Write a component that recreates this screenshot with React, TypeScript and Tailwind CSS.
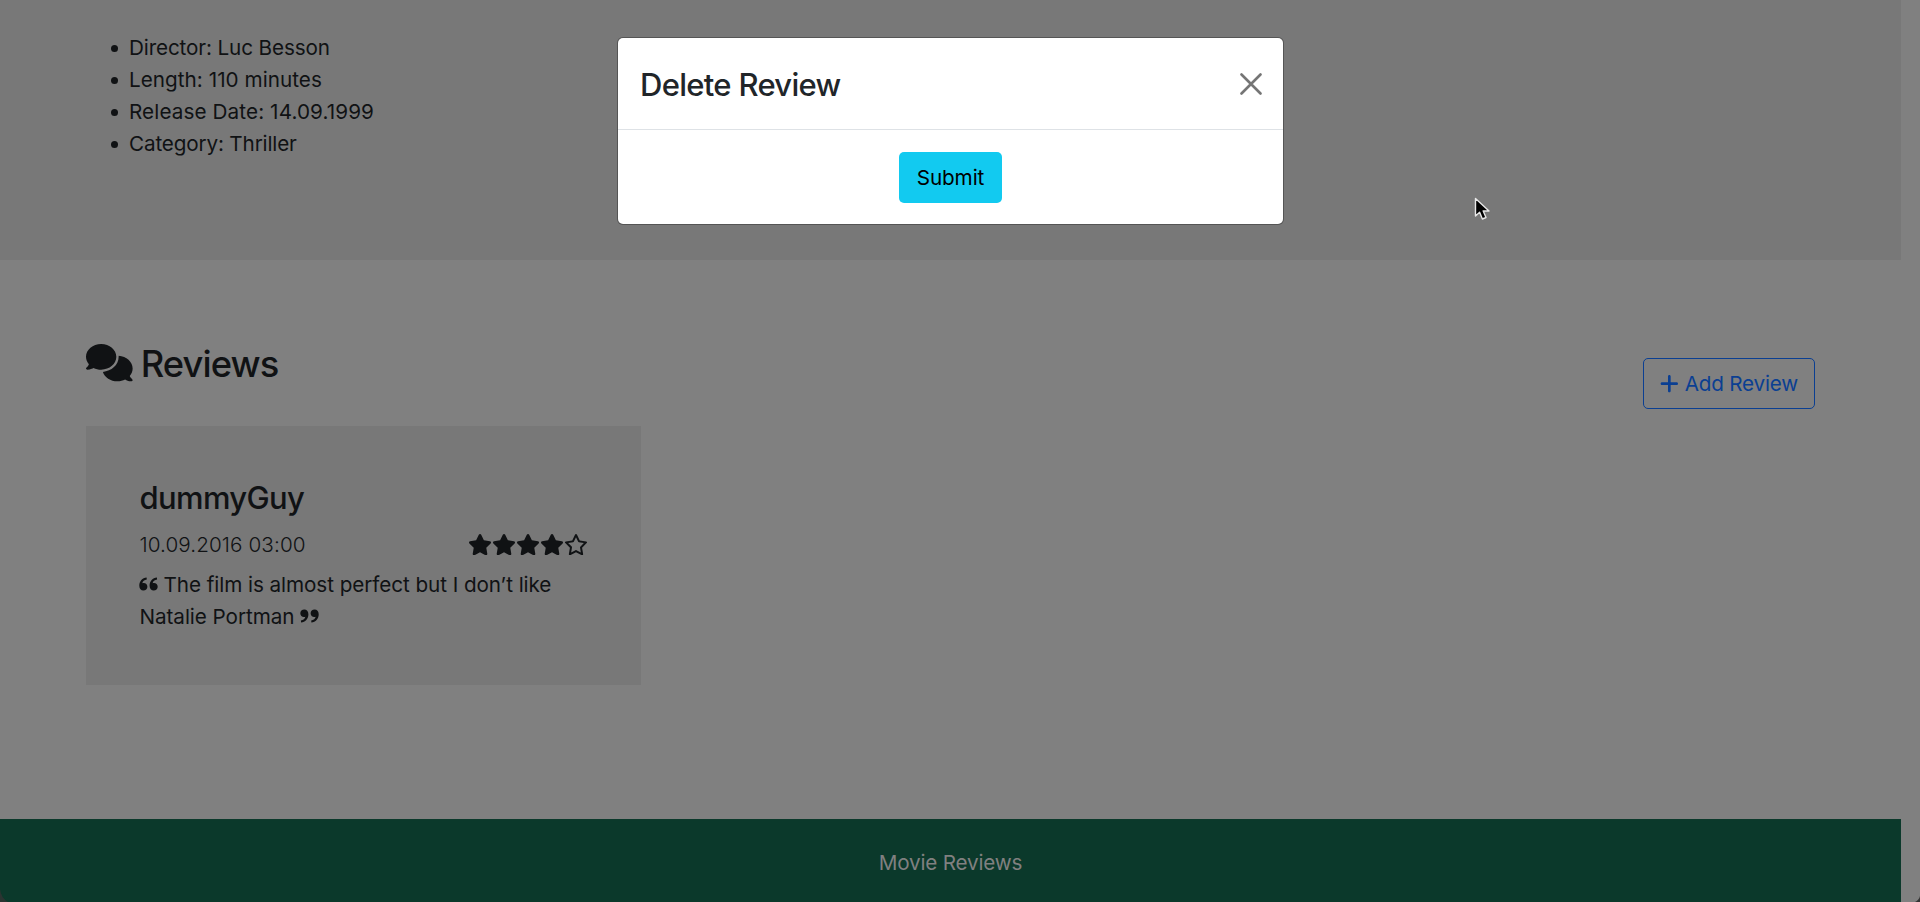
import { FaComments, FaPlus, FaRegStar, FaStar } from "react-icons/fa6";

const facts = [
  { text: "Director: Luc Besson", tracking: "tracking-[-0.13px]" },
  { text: "Length: 110 minutes", tracking: "tracking-[0.03px]" },
  { text: "Release Date: 14.09.1999", tracking: "tracking-[0.1px]" },
  { text: "Category: Thriller", tracking: "tracking-[-0.16px]" },
];

function QuoteMark({ className }: { className: string }) {
  return (
    <svg viewBox="0 0 19 14" className={className} fill="currentColor">
      <path d="M7.6 0.5C3.4 1 0.3 4 0.3 8.8C0.3 11.8 2 13.6 4.4 13.6C6.7 13.6 8.4 12 8.4 9.7C8.4 7.4 6.8 5.9 4.7 5.9C4.2 5.9 3.7 6 3.3 6.2C3.7 4.2 5.3 2.9 7.8 2.5Z" />
      <path d="M17.9 0.5C13.7 1 10.6 4 10.6 8.8C10.6 11.8 12.3 13.6 14.7 13.6C17 13.6 18.7 12 18.7 9.7C18.7 7.4 17.1 5.9 15 5.9C14.5 5.9 14 6 13.6 6.2C14 4.2 15.6 2.9 18.1 2.5Z" />
    </svg>
  );
}

function MovieFacts() {
  return (
    <section className="h-[260px] bg-[#787878] pt-8 pl-[129px]">
      <ul>
        {facts.map((fact) => (
          <li key={fact.text} className="relative h-8">
            <span className="absolute top-[13px] -left-[18px] size-[7px] rounded-full bg-[#101214]" />
            <span className={fact.tracking}>{fact.text}</span>
          </li>
        ))}
      </ul>
    </section>
  );
}

function ReviewCard() {
  return (
    <article className="mt-4 h-[259px] w-[555px] bg-[#787878] pt-[53px] pr-[53px] pl-[53.5px]">
      <h3 className="h-[42px] text-[31px] leading-[38px] font-medium tracking-[-0.65px]">dummyGuy</h3>
      <div className="mt-2 flex h-8 items-center justify-between">
        <span className="font-light tracking-[0.08px]">10.09.2016 03:00</span>
        <span className="mb-px flex">
          {[0, 1, 2, 3].map((n) => (
            <FaStar key={n} className="h-[21.33px] w-6" />
          ))}
          <FaRegStar className="h-[21.33px] w-6" />
        </span>
      </div>
      <p className="mt-2 whitespace-nowrap">
        <QuoteMark className="mr-[6px] -ml-px inline h-[14px] w-[19px] align-[1px]" />
        <span className="tracking-[-0.07px]">The film is almost perfect but I don’t like</span>
        <br />
        <span className="tracking-[-0.07px]">Natalie Portman</span>
        <QuoteMark className="ml-[6px] inline h-[14px] w-[19px] rotate-180 align-[1px]" />
      </p>
    </article>
  );
}

function DeleteDialog() {
  return (
    <div
      role="dialog"
      className="absolute top-[38px] left-[618px] h-[186px] w-[665px] rounded-[5px] bg-white text-[#212529] ring-1 ring-[#555]"
    >
      <header className="flex h-[92px] items-center justify-between border-b border-[#dee2e6] pr-[21px] pl-[22px]">
        <h2 className="pt-[2px] text-[31px] font-medium tracking-[-0.7px]">Delete Review</h2>
        <button aria-label="Close">
          <svg viewBox="0 0 22 22" className="size-[22px]" fill="none" stroke="#757575" strokeWidth="2.6" strokeLinecap="round">
            <path d="M1.5 1.5 20.5 20.5M20.5 1.5 1.5 20.5" />
          </svg>
        </button>
      </header>
      <div className="flex justify-center pt-[22px]">
        <button className="h-[51px] w-[103px] rounded-[5px] bg-[#12caf0] tracking-[-0.1px] text-black">Submit</button>
      </div>
    </div>
  );
}

export default function App() {
  return (
    <div className="relative flex h-[902px] w-full overflow-hidden bg-[#808080] font-[Inter,sans-serif] text-[20.7px] leading-8 text-[#101214]">
      <div className="flex w-[1901px] flex-col">
        <MovieFacts />
        <main className="h-[559px] px-[86px] pt-[81px]">
          <div className="flex h-[69px] justify-between">
            <h1 className="flex h-[46px] items-center gap-[8px] text-[36.3px] font-medium">
              <FaComments className="mb-[2px] h-[37.33px] w-[46.67px]" />
              <span className="tracking-[-0.9px]">Reviews</span>
            </h1>
            <button className="mt-[17px] flex h-[51px] w-[172px] items-center justify-center gap-[6px] rounded-[5px] border border-[#0b3f92] text-[#0b3f92]">
              <FaPlus className="h-[21.33px] w-[18.67px]" />
              <span className="tracking-[-0.23px]">Add Review</span>
            </button>
          </div>
          <ReviewCard />
        </main>
        <footer className="flex h-[83px] items-center justify-center bg-[#0b392b] pt-1 text-[#808080]">
          <span className="tracking-[-0.2px]">Movie Reviews</span>
        </footer>
      </div>
      <DeleteDialog />
      <svg viewBox="0 0 16 24" className="absolute top-[197px] left-[1474px] h-6 w-4">
        <path d="M1.5 1.5V19L5.6 15.2 8.4 22 12 20.5 9.2 14H15Z" fill="#000" stroke="#e8e8e8" strokeWidth="1.4" strokeLinejoin="round" />
      </svg>
      <svg viewBox="0 0 8 13" className="absolute bottom-0 left-0 h-[13px] w-2">
        <path d="M0 0Q1 9 8 13H0Z" fill="#2a3431" />
      </svg>
      <svg viewBox="0 0 5 6" className="absolute right-0 bottom-0 h-[6px] w-[5px]">
        <path d="M5 0Q4 4 0 6H5Z" fill="#333" />
      </svg>
    </div>
  );
}
